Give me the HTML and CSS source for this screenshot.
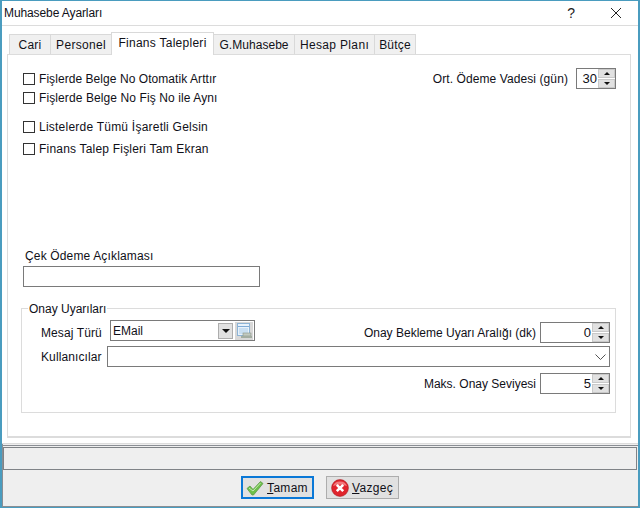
FILE: index.html
```html
<!DOCTYPE html>
<html lang="tr">
<head>
<meta charset="utf-8">
<title>Muhasebe Ayarları</title>
<link rel="stylesheet" href="styles.css">
</head>
<body>
<div class="window">
  <header class="titlebar">
    <span class="title">Muhasebe Ayarları</span>
    <span class="help">?</span>
    <svg class="close" width="12" height="12" viewBox="0 0 12 12"><path d="M1 1L11 11M11 1L1 11" stroke="#222" stroke-width="1" fill="none"/></svg>
  </header>
  <main class="content">
    <nav class="tabs">
      <span class="tab tab-cari">Cari</span>
      <span class="tab tab-personel">Personel</span>
      <span class="tab active">Finans Talepleri</span>
      <span class="tab tab-gm">G.Muhasebe</span>
      <span class="tab tab-hp">Hesap Planı</span>
      <span class="tab tab-butce">Bütçe</span>
    </nav>
    <section class="panel">
      <div class="top">
        <div class="checks">
          <label class="check c1"><span class="box"></span>Fişlerde Belge No Otomatik Arttır</label>
          <label class="check c2"><span class="box"></span>Fişlerde Belge No Fiş No ile Aynı</label>
          <label class="check c3"><span class="box"></span>Listelerde Tümü İşaretli Gelsin</label>
          <label class="check c4"><span class="box"></span>Finans Talep Fişleri Tam Ekran</label>
        </div>
        <div class="field vade">
          <span class="vade-label">Ort. Ödeme Vadesi (gün)</span>
          <div class="spin s40"><span class="val">30</span><span class="arrows"><i class="up"></i><i class="down"></i></span></div>
        </div>
      </div>
      <div class="cek">
        <div class="cek-label">Çek Ödeme Açıklaması</div>
        <div class="input cek-input"></div>
      </div>
      <div class="group">
        <span class="legend">Onay Uyarıları</span>
        <div class="row r1">
          <div class="field mesaj-field">
            <span class="mesaj">Mesaj Türü</span>
            <div class="combo">
              <span class="combo-val">EMail</span>
              <span class="drop"><i class="down-big"></i></span>
              <span class="listbtn">
                <svg width="18" height="18" viewBox="0 0 18 18">
                  <rect x="2.5" y="1.5" width="12" height="12" fill="#e8f2fb" stroke="#8db4d6"/>
                  <path d="M3 4.5H14" stroke="#7fabd6"/>
                  <path d="M4 7H13M4 9H13M4 11H13" stroke="#a9cbe8"/>
                  <rect x="8" y="11" width="8" height="3" fill="#c2cac0" stroke="#8a9489" stroke-width=".6"/>
                  <rect x="6" y="14" width="11" height="2" fill="#a3ada1"/>
                </svg>
              </span>
            </div>
          </div>
          <div class="field tight">
            <span>Onay Bekleme Uyarı Aralığı (dk)</span>
            <div class="spin s70"><span class="val">0</span><span class="arrows"><i class="up"></i><i class="down"></i></span></div>
          </div>
        </div>
        <div class="row r2">
          <span class="kul">Kullanıcılar</span>
          <div class="input kul-input">
            <svg width="11" height="6" viewBox="0 0 11 6"><path d="M.5 .5L5.5 5.5L10.5 .5" stroke="#555" fill="none"/></svg>
          </div>
        </div>
        <div class="row r3">
          <div class="field tight">
            <span>Maks. Onay Seviyesi</span>
            <div class="spin s70"><span class="val">5</span><span class="arrows"><i class="up"></i><i class="down"></i></span></div>
          </div>
        </div>
      </div>
    </section>
  </main>
  <footer class="footer">
    <div class="status"></div>
    <div class="buttons">
      <button class="btn default">
        <svg width="18" height="16" viewBox="0 0 18 16"><path d="M1 8.5L4 6L7 9.5L14.5 1.5L17 3.5L7.5 15H6Z" fill="#6cc04a" stroke="#5d9a49" stroke-width=".8"/><path d="M3 8L7 11L14.5 3" stroke="#c4eab0" fill="none"/></svg>
        <span><u>T</u>amam</span>
      </button>
      <button class="btn">
        <svg width="18" height="18" viewBox="0 0 18 18"><circle cx="9" cy="9" r="8.4" fill="#e0242c" stroke="#a81a20" stroke-width=".6"/><path d="M2 7A7.5 7 0 0 1 16 7Q9 4 2 7Z" fill="#f2787c"/><path d="M5.8 5.8L12.2 12.2M12.2 5.8L5.8 12.2" stroke="#fff" stroke-width="2.6"/></svg>
        <span><u>V</u>azgeç</span>
      </button>
    </div>
  </footer>
</div>
</body>
</html>
```
FILE: styles.css
```css
* { box-sizing: border-box; }
html, body { margin: 0; padding: 0; }
body {
  width: 640px;
  height: 508px;
  overflow: hidden;
  font-family: "Liberation Sans", Arial, sans-serif;
  font-size: 12px;
  color: #101018;
  background: #fff;
}
.window {
  width: 640px;
  height: 508px;
  display: flex;
  flex-direction: column;
  border-style: solid;
  border-color: #4a9cbf;
  border-width: 1px 2px 1px 2px;
  background: #fff;
}
.titlebar {
  height: 25px;
  flex: none;
  display: flex;
  align-items: center;
  padding: 0 16px 0 2px;
  border-bottom: 1px solid #dcdcdc;
}
.title { flex: 1; font-size: 12px; letter-spacing: -.1px; }
.help { font-size: 14px; margin-right: 35px; color: #222; }
.close { display: block; }
.content { flex: none; height: 418px; padding: 6px 6px 0 5px; border-bottom: 1px solid #dcdcdc; }
.tabs { display: flex; height: 22px; align-items: flex-end; padding-left: 2px; position: relative; z-index: 1; }
.tab {
  height: 20px;
  display: flex;
  align-items: center;
  justify-content: center;
  background: #f0f0f0;
  border: 1px solid #d9d9d9;
  border-bottom: 0;
  border-left: 0;
  font-size: 12px;
}
.tab-cari { width: 42px; border-left: 1px solid #d9d9d9; letter-spacing: .25px; }
.tab-personel { width: 61px; letter-spacing: .3px; }
.tab-gm { width: 81px; letter-spacing: .05px; }
.tab-hp { width: 80px; letter-spacing: .35px; }
.tab-butce { width: 41px; letter-spacing: .2px; }
.tab.active {
  width: 103px;
  height: 23px;
  margin-bottom: -1px;
  padding-bottom: 3px;
  background: #fff;
  border-left: 1px solid #d9d9d9;
  margin-left: -1px;
  letter-spacing: .27px;
}
.panel {
  width: 624px;
  height: 384px;
  border: 1px solid #dcdcdc;
  border-bottom-width: 2px;
  padding: 13px 14px 0 15px;
}
.top { display: flex; justify-content: space-between; height: 181px; }
.checks { display: flex; flex-direction: column; padding-top: 3px; }
.check { display: flex; align-items: center; gap: 4px; height: 16px; white-space: nowrap; }
.c1 { letter-spacing: .06px; }
.c2 { margin-top: 3px; letter-spacing: .1px; }
.c3 { margin-top: 13px; letter-spacing: .23px; }
.c4 { margin-top: 6px; letter-spacing: .2px; }
.box { width: 12px; height: 12px; border: 1px solid #333; background: #fff; flex: none; }
.field { display: flex; align-items: center; gap: 8px; white-space: nowrap; }
.tight { gap: 4px; }
.vade { height: 21px; align-self: flex-start; }
.vade-label { letter-spacing: .09px; }
.spin {
  height: 21px;
  border: 1px solid #7a7a7a;
  display: flex;
  align-items: center;
  background: #fff;
  font-size: 13px;
}
.s40 { width: 40px; }
.s70 { width: 70px; }
.val { flex: 1; text-align: right; padding-right: 1px; }
.arrows { width: 17px; height: 19px; display: flex; flex-direction: column; gap: 1px; }
.arrows i {
  flex: 1;
  background: #e1e1e1;
  border: 1px solid #c9c9c9;
  display: flex;
  align-items: center;
  justify-content: center;
}
.arrows i::after {
  content: "";
  border-left: 3px solid transparent;
  border-right: 3px solid transparent;
}
.up::after { border-bottom: 3px solid #111; }
.down::after { border-top: 3px solid #111; }
.cek-label { height: 17px; line-height: 14px; padding-left: 2px; letter-spacing: .15px; }
.input { height: 21px; border: 1px solid #7a7a7a; background: #fff; }
.cek-input { width: 237px; }
.group {
  position: relative;
  width: 595px;
  height: 105px;
  margin: 21px 0 0 -2px;
  border: 1px solid #dcdcdc;
  padding: 13px 5px 0 19px;
}
.legend {
  position: absolute;
  left: 6px;
  top: -7px;
  padding: 0 1px;
  background: #fff;
  line-height: 14px;
}
.row { display: flex; align-items: center; }
.r1 { justify-content: space-between; height: 21px; }
.r2 { margin-top: 3px; height: 21px; gap: 5px; }
.r3 { margin-top: 6px; height: 21px; justify-content: flex-end; }
.mesaj-field { align-items: flex-start; gap: 8px; height: 21px; }
.mesaj { width: 61px; line-height: 14px; margin-top: 4px; letter-spacing: .1px; }
.kul { width: 61px; letter-spacing: .1px; }
.combo {
  width: 145px;
  height: 21px;
  margin-top: -2px;
  border: 1px solid #7a7a7a;
  display: flex;
  align-items: center;
  background: #fff;
  padding-right: 1px;
}
.combo-val { flex: 1; padding-left: 2px; line-height: 14px; }
.drop {
  width: 15px;
  height: 16px;
  margin-right: 2px;
  background: #e1e1e1;
  border: 1px solid #adadad;
  display: flex;
  align-items: center;
  justify-content: center;
}
.down-big {
  border-left: 4px solid transparent;
  border-right: 4px solid transparent;
  border-top: 4px solid #111;
}
.listbtn {
  width: 18px;
  height: 18px;
  background: #d8d8d8;
  display: block;
}
.listbtn svg { display: block; }
.kul-input {
  flex: 1;
  display: flex;
  align-items: center;
  justify-content: flex-end;
  padding-right: 3px;
}
.footer {
  flex: 1;
  display: flex;
  flex-direction: column;
  background: #efefef;
  border-left: 1px solid #8a8e94;
  border-bottom: 1px solid #8a8e94;
}
.footer::before {
  content: "";
  display: block;
  height: 1px;
  margin: 1px 0;
  background: #8a8e94;
}
.status { height: 23px; width: 634px; border: 1px solid #7f8387; background: #efefef; }
.buttons { display: flex; justify-content: center; gap: 12px; padding-top: 6px; padding-right: 2px; }
.btn {
  width: 73px;
  height: 23px;
  background: #e1e1e1;
  border: 1px solid #adadad;
  display: flex;
  align-items: center;
  justify-content: center;
  gap: 3px;
  padding: 0;
  font: inherit;
  color: #101018;
  letter-spacing: .3px;
}
.btn.default { border: 2px solid #0a78d7; }
```
